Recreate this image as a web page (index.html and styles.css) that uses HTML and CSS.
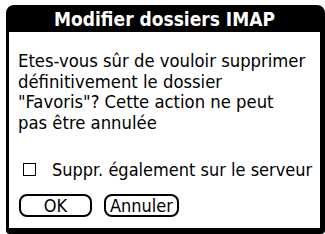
FILE: index.html
```html
<!DOCTYPE html>
<html lang="fr">
<head>
    <meta charset="UTF-8">
    <title>Modifier dossiers IMAP</title>
    <link rel="stylesheet" href="styles.css">
</head>
<body>
    <div class="dialog">
        <div class="dlg-title">Modifier dossiers IMAP</div>
        <div class="dlg-body">
            <p class="dlg-msg">Etes-vous sûr de vouloir supprimer<br>définitivement le dossier<br>"Favoris"? Cette action ne peut<br>pas être annulée</p>
            <label class="dlg-check">
                <span class="box"></span>
                <span>Suppr. également sur le serveur</span>
            </label>
            <div class="dlg-btns">
                <span class="btn btn-ok">OK</span>
                <span class="btn">Annuler</span>
            </div>
        </div>
    </div>
</body>
</html>
```

FILE: styles.css
```css
html,body{
    margin: 0;
    background: #fff;
}
body{
    padding: 5px 1px 1px 6px;
    font-family: "DejaVu Sans Condensed", "DejaVu Sans", sans-serif;
    color: #000;
}
.dialog{
    width: 311px;
    height: 220px;
    border: 3px solid #000;
    border-right-width: 5px;
    border-bottom-width: 6px;
    border-radius: 8px 8px 4px 4px;
    display: flex;
    flex-direction: column;
}
.dlg-title{
    background: #000;
    color: #fff;
    font-weight: bold;
    font-size: 19px;
    height: 24px;
    line-height: 22px;
    text-align: center;
}
.dlg-body{
    flex: 1;
    padding: 0 0 0 9px;
}
.dlg-msg{
    margin: 19px 0 0;
    font-size: 18.3px;
    line-height: 20.5px;
    white-space: nowrap;
}
.dlg-check{
    display: flex;
    align-items: center;
    gap: 16px;
    margin: 26px 0 0 5px;
    font-size: 18px;
    line-height: 21px;
}
.box{
    width: 11px;
    height: 11px;
    border: 1px solid #000;
}
.dlg-btns{
    display: flex;
    gap: 12px;
    margin-top: 14px;
    margin-left: 1px;
}
.btn{
    display: inline-block;
    border: 2px solid #000;
    border-radius: 8px;
    height: 19px;
    line-height: 19px;
    font-size: 18px;
    padding: 0 4px;
    text-align: center;
}
.btn-ok{
    width: 69px;
    padding: 0;
}
```
